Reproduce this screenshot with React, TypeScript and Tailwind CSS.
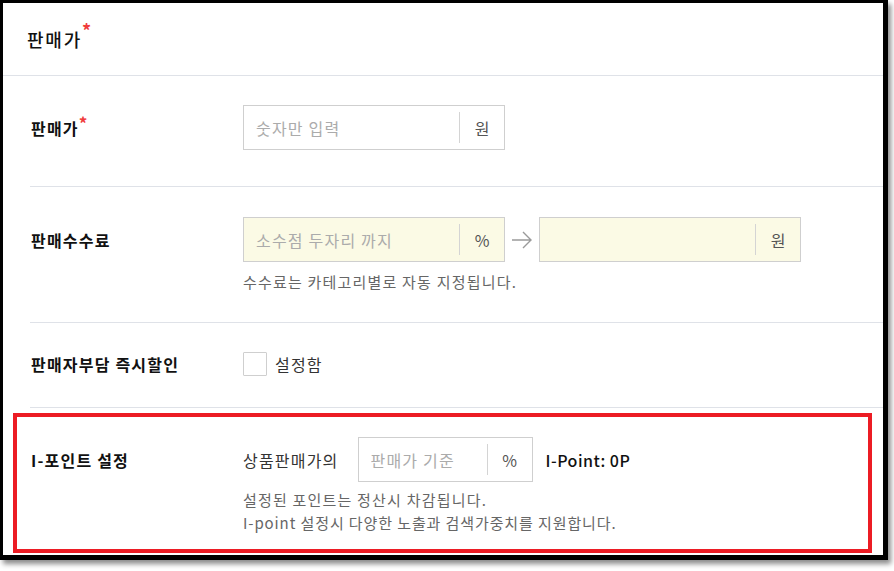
import React from "react";

const font = { fontFamily: '"Noto Sans CJK KR", "Noto Sans", sans-serif' };

function Field({
  width,
  placeholder,
  suffix,
  yellow,
}: {
  width: string;
  placeholder?: string;
  suffix: string;
  yellow?: boolean;
}) {
  return (
    <div
      className={`${width} h-[45px] flex items-center border border-[#cfcfcf] ${
        yellow ? "bg-[#fbfae5]" : "bg-white"
      }`}
    >
      <input
        readOnly
        placeholder={placeholder}
        className="flex-1 min-w-0 h-full bg-transparent pl-[12px] text-[16px] text-[#333] placeholder:text-[#ababab] outline-none"
      />
      <div className="w-px h-[31px] bg-[#d4d4d4]" />
      <div className="w-[44px] text-center text-[16px] text-[#555] tracking-normal">{suffix}</div>
    </div>
  );
}

function Arrow() {
  return (
    <svg width="22" height="20" viewBox="0 0 22 20" className="mx-[6px]">
      <path d="M1 10 H20 M12 2 L20 10 L12 18" fill="none" stroke="#9a9a9a" strokeWidth="1.4" />
    </svg>
  );
}

export default function App() {
  return (
    <div className="w-[894px] h-[571px] bg-white overflow-hidden tracking-[0.075em]" style={font}>
      <div className="w-[888px] h-[560px] bg-white border-black border-t-[3px] border-l-[3px] border-r-[5px] border-b-[5px] shadow-[3px_4px_5px_rgba(0,0,0,0.45)] flex flex-col">
        {/* header */}
        <div className="h-[73px] shrink-0 flex items-center pl-[24px] border-b border-[#dfe2e8]">
          <span className="text-[18px] font-medium text-[#111] tracking-[0.1em]">판매가</span>
          <span className="text-[18px] text-[#f03c3c] self-start mt-[18px] leading-none font-bold">*</span>
        </div>

        <div className="ml-[27px] flex flex-col">
          {/* row 1 */}
          <div className="pt-[29px] pb-[36px] border-b border-[#dfe2e8] flex items-center">
            <div className="w-[213px] flex items-start">
              <span className="text-[16px] font-bold text-[#111] pl-[1px]">판매가</span>
              <span className="text-[17px] text-[#f03c3c] font-bold leading-none mt-[-2px]">*</span>
            </div>
            <Field width="w-[262px]" placeholder="숫자만 입력" suffix="원" />
          </div>

          {/* row 2 */}
          <div className="pt-[30px] pb-[29px] border-b border-[#dfe2e8] flex">
            <div className="w-[213px] h-[45px] flex items-center">
              <span className="text-[16px] font-bold text-[#111] pl-[1px]">판매수수료</span>
            </div>
            <div className="flex flex-col">
              <div className="flex items-center">
                <Field width="w-[262px]" placeholder="소수점 두자리 까지" suffix="%" yellow />
                <Arrow />
                <Field width="w-[262px]" suffix="원" yellow />
              </div>
              <div className="mt-[9px] h-[22px] leading-[22px] text-[15px] text-[#666]">
                수수료는 카테고리별로 자동 지정됩니다.
              </div>
            </div>
          </div>

          {/* row 3 */}
          <div className="pt-[29px] pb-[31px] border-b border-[#dfe2e8] flex items-center h-[85px]">
            <div className="w-[213px] flex items-center">
              <span className="text-[16px] font-bold text-[#111] pl-[1px]">판매자부담 즉시할인</span>
            </div>
            <div className="w-[24px] h-[24px] border border-[#cfcfcf] rounded-[1px] bg-white" />
            <span className="ml-[8px] text-[16px] text-[#333]">설정함</span>
          </div>

          {/* row 4 with red annotation */}
          <div className="mt-[5px] ml-[-17px] w-[859px] border-[4px] border-[#ec1c24] pl-[14px] pt-[20px] pb-[15px] flex">
            <div className="w-[212px] h-[45px] flex items-center">
              <span className="text-[16px] font-bold text-[#111]">I-포인트 설정</span>
            </div>
            <div className="flex flex-col">
              <div className="flex items-center">
                <span className="text-[16px] text-[#333] mr-[19px]">상품판매가의</span>
                <Field width="w-[175px]" placeholder="판매가 기준" suffix="%" />
                <span className="ml-[13px] text-[16px] font-medium text-[#111] tracking-[0.03em]">I-Point: 0P</span>
              </div>
              <div className="mt-[6px] text-[15px] leading-[23px] text-[#666]">
                <div>설정된 포인트는 정산시 차감됩니다.</div>
                <div className="tracking-[0.06em]">I-point 설정시 다양한 노출과 검색가중치를 지원합니다.</div>
              </div>
            </div>
          </div>
        </div>
      </div>
    </div>
  );
}
